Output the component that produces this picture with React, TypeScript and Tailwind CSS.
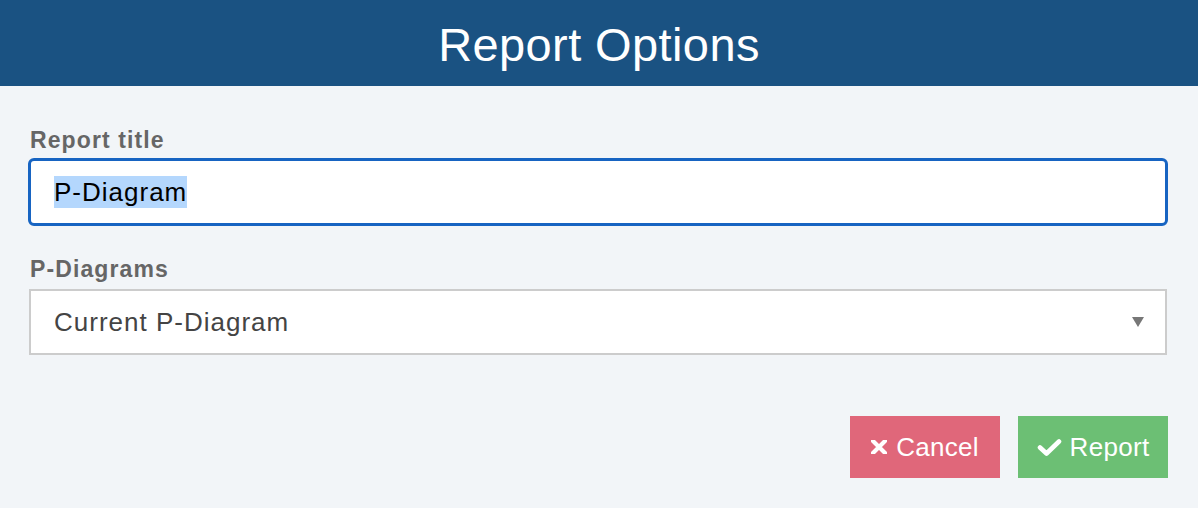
const font = { fontFamily: '"Liberation Sans", Arial, sans-serif' };

export default function App() {
	return (
		<div className="w-[1198px] h-[508px] bg-[#f2f5f8] flex flex-col" style={font}>
			<div className="h-[86px] bg-[#1a5282] flex items-center justify-center">
				<h1 className="text-white text-[47px] leading-none tracking-[0.4px] mt-[2px]">Report Options</h1>
			</div>

			<div className="pl-[28px] pr-[30px] flex flex-col">
				<label className="mt-[41px] h-[26px] leading-[26px] text-[23px] font-bold text-[#666] pl-[2px] tracking-[1.1px]">
					Report title
				</label>
				<div className="mt-[5px] h-[68px] bg-white border-[3px] border-[#1764c2] rounded-[6px] flex items-center pl-[23px]">
					<span className="bg-[#b4d7fd] text-black text-[26px] leading-[32px] tracking-[1px]">P-Diagram</span>
				</div>

				<label className="mt-[30px] h-[26px] leading-[26px] text-[23px] font-bold text-[#666] pl-[2px] tracking-[1.1px]">
					P-Diagrams
				</label>
				<div className="mt-[7px] ml-[1px] mr-[1px] h-[66px] bg-white border-2 border-[#cccccc] flex items-center justify-between pl-[23px] pr-[21px]">
					<span className="text-[#444] text-[26px] leading-[32px] tracking-[1px]">Current P-Diagram</span>
					<svg width="12" height="10" viewBox="0 0 12 10">
						<path d="M0 0 L12 0 L6 10 Z" fill="#777" />
					</svg>
				</div>

				<div className="mt-[61px] flex justify-end gap-[18px]">
					<button className="w-[150px] h-[62px] bg-[#e0677a] text-white text-[26px] flex items-center justify-center gap-[9px]">
						<svg width="16" height="14" viewBox="0 0 16 14">
							<path d="M2 1 L14 13 M14 1 L2 13" stroke="white" strokeWidth="4.2" strokeLinecap="round" />
						</svg>
						<span className="tracking-[0.3px]">Cancel</span>
					</button>
					<button className="w-[150px] h-[62px] bg-[#6cbf74] text-white text-[26px] flex items-center justify-center gap-[8px]">
						<svg width="25" height="17" viewBox="0 0 25 17">
							<path d="M3 8.5 L9.5 14.5 L22 2.5" fill="none" stroke="white" strokeWidth="4.6" strokeLinecap="round" strokeLinejoin="round" />
						</svg>
						<span className="tracking-[0.3px]">Report</span>
					</button>
				</div>
			</div>
		</div>
	);
}
